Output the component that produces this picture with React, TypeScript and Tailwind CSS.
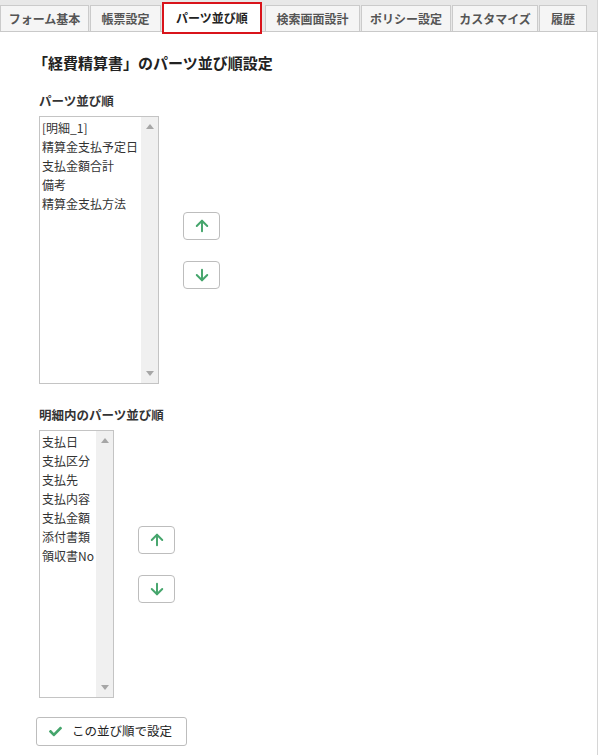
import { ArrowDown, ArrowUp } from "lucide-react";
import { FaCheck } from "react-icons/fa";

const tabs = [
  { label: "フォーム基本", w: "w-[89px]" },
  { label: "帳票設定", w: "w-[71px]" },
  { label: "パーツ並び順", w: "w-[100px]", active: true },
  { label: "検索画面設計", w: "w-[95px] ml-[2px]" },
  { label: "ポリシー設定", w: "w-[90px]" },
  { label: "カスタマイズ", w: "w-[86px]" },
  { label: "履歴", w: "w-[48px]" },
];

const parts = ["[明細_1]", "精算金支払予定日", "支払金額合計", "備考", "精算金支払方法"];
const detailParts = ["支払日", "支払区分", "支払先", "支払内容", "支払金額", "添付書類", "領収書No"];

const TabBar = () => (
  <nav className="flex h-[32px] items-end gap-[1px] border-b border-[#c9c9c9] bg-[#e8e8e8] pt-[5px]">
    {tabs.map((t) =>
      t.active ? (
        <div
          key={t.label}
          className={`${t.w} relative z-10 -mb-[3px] flex h-[32px] items-center justify-center border-2 border-[#d9141b] bg-white text-[12px] font-bold text-[#222]`}
        >
          {t.label}
        </div>
      ) : (
        <div
          key={t.label}
          className={`${t.w} flex h-[26px] items-center justify-center border border-b-0 border-[#cbcbcb] bg-[#f5f5f5] text-[12px] font-bold text-[#555]`}
        >
          {t.label}
        </div>
      )
    )}
  </nav>
);

const Triangle = ({ down }: { down?: boolean }) => (
  <svg width="8" height="5" viewBox="0 0 8 5" className="block">
    <polygon points={down ? "0,0 8,0 4,5" : "0,5 8,5 4,0"} fill="#a6a6a6" />
  </svg>
);

const ListBox = ({ items, width }: { items: string[]; width: string }) => (
  <div className={`${width} flex h-[268px] border border-[#c4c4c4] bg-white`}>
    <ul className="min-w-0 flex-1 overflow-hidden pl-[2px] pt-[1px] text-[12px] leading-[19px] text-[#333]">
      {items.map((item) => (
        <li key={item} className="whitespace-nowrap">
          {item}
        </li>
      ))}
    </ul>
    <div className="flex w-[17px] flex-col items-center justify-between bg-[#f0f0f0] pb-[7px] pt-[7px]">
      <Triangle />
      <Triangle down />
    </div>
  </div>
);

const MoveButtons = () => (
  <div className="flex flex-col gap-[21px]">
    <button
      type="button"
      className="flex h-[28px] w-[37px] items-center justify-center rounded-[4px] border border-[#bdbdbd] bg-white text-[#45a56c]"
    >
      <ArrowUp size={18} strokeWidth={2.6} />
    </button>
    <button
      type="button"
      className="flex h-[28px] w-[37px] items-center justify-center rounded-[4px] border border-[#bdbdbd] bg-white text-[#45a56c]"
    >
      <ArrowDown size={18} strokeWidth={2.6} />
    </button>
  </div>
);

export default function App() {
  return (
    <div className="min-h-[755px] w-[598px] border-r border-[#d6d6d6] bg-white font-['Noto_Sans_CJK_JP',sans-serif]">
      <TabBar />

      <main className="pl-[39px]">
        <h1 className="-ml-[6px] mt-[20px] text-[15px] font-bold leading-[22px] text-[#222]">
          「経費精算書」のパーツ並び順設定
        </h1>

        <h2 className="mb-[6px] mt-[18px] text-[12.5px] font-bold leading-[18px] text-[#333]">
          パーツ並び順
        </h2>
        <div className="flex items-center gap-[24px]">
          <ListBox items={parts} width="w-[120px]" />
          <MoveButtons />
        </div>

        <h2 className="mb-[6px] mt-[22px] text-[12.5px] font-bold leading-[18px] text-[#333]">
          明細内のパーツ並び順
        </h2>
        <div className="flex items-center gap-[24px]">
          <ListBox items={detailParts} width="w-[75px]" />
          <MoveButtons />
        </div>

        <button
          type="button"
          className="-ml-[3px] mt-[19px] flex h-[29px] w-[151px] items-center gap-[10px] rounded-[3px] border border-[#bdbdbd] bg-white pl-[12px] text-[12.5px] text-[#222]"
        >
          <FaCheck className="text-[#45a56c]" size={13} />
          この並び順で設定
        </button>
      </main>
    </div>
  );
}
